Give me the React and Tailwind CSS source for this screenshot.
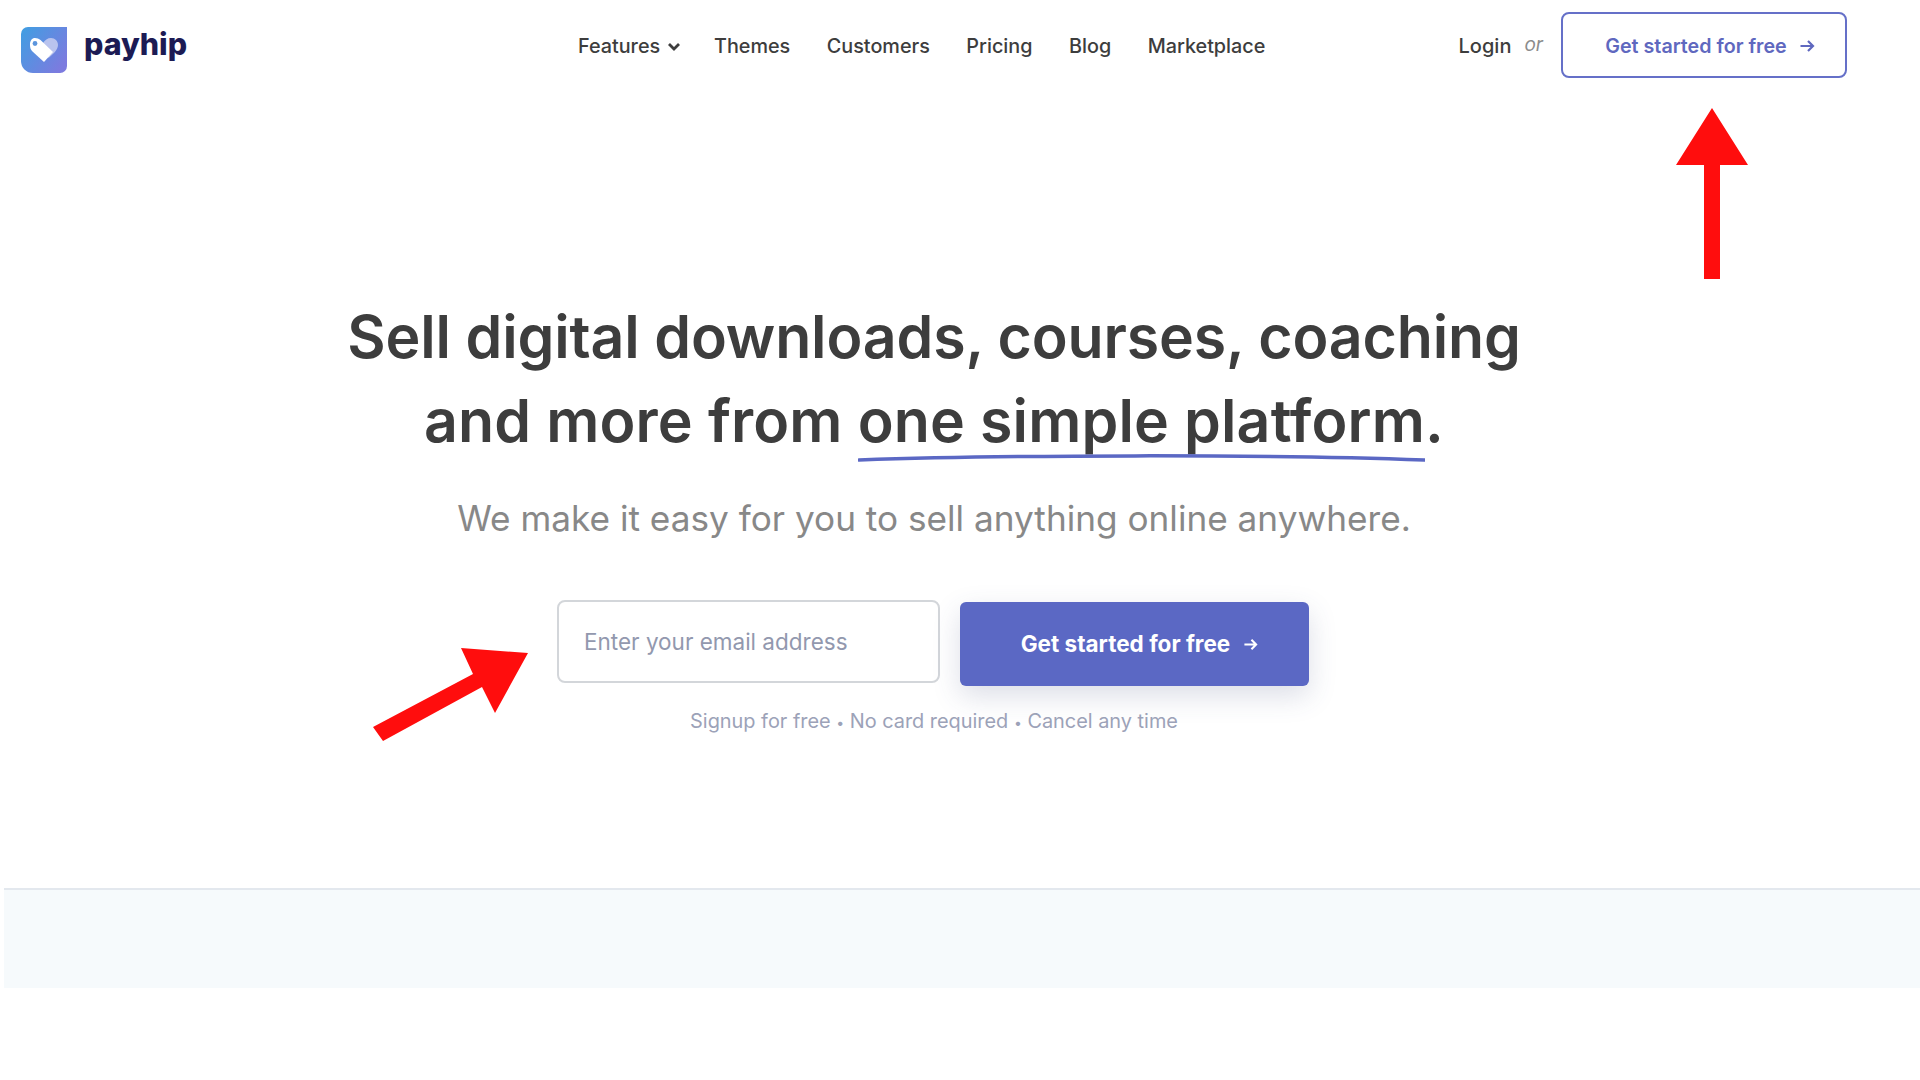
import React from 'react';

const navLinks = ['Themes', 'Customers', 'Pricing', 'Blog', 'Marketplace'];

const ArrowRight = ({ className }) => (
  <svg viewBox="0 0 16 16" className={className} fill="none" stroke="currentColor" strokeWidth="2.200">
    <path d="M1.500 8h12.500M9 3l5 5-5 5" />
  </svg>
);

const Logo = () => (
  <svg viewBox="0 0 46 46" className="w-[46px] h-[46px] mt-[10px]">
    <defs>
      <linearGradient id="logoFill" x1="0" y1="0" x2="1" y2="0.7">
        <stop offset="0" stopColor="#3f9fe2" />
        <stop offset="1" stopColor="#7c7bdf" />
      </linearGradient>
    </defs>
    <path d="M7 0H46V39a7 7 0 0 1-7 7H12A12 12 0 0 1 0 34V7A7 7 0 0 1 7 0Z" fill="url(#logoFill)" />
    <path d="M22 16c2-3 4.500-5 8-5 4 0 7 3 7 7 0 5-5 9-9.500 13Z" fill="#b9c3ee" />
    <path d="M14 11c2 0 4 .8 5.500 2L32 25 23 35 11.500 24.500C9.500 22.500 9 20.500 9 17.500c0-4 2-6.500 5-6.500Z" fill="#fff" />
    <circle cx="14" cy="16.500" r="2.400" fill="#5b95dd" />
  </svg>
);

const ArrowOverlays = () => (
  <>
    <svg viewBox="0 0 72 171" className="absolute left-[1676px] top-[108px] w-[72px] h-[171px]">
      <path d="M36 0L72 57H44V171H28V57H0Z" fill="#ff0d0d" />
    </svg>
    <svg viewBox="0 0 156 94" className="absolute left-[373px] top-[648px] w-[156px] h-[94px]">
      <path d="M155 5L88 0L100 26L0 79L10 93L109 39L122 65Z" fill="#ff0d0d" />
    </svg>
  </>
);

export default function App() {
  return (
    <div className="relative min-h-[1080px] bg-white overflow-hidden font-['Inter',sans-serif] text-[#3d3d3d]">
      <header className="flex items-center h-[66px] mt-[12px] pl-[21px]">
        <a className="flex items-center gap-[17px] w-[557px]">
          <Logo />
          <span className="text-[30.400px] font-extrabold leading-none text-[#1c1b54] mb-[2px]">payhip</span>
        </a>
        <nav className="flex items-center text-[19.800px] font-medium leading-[28px] mt-[1px]">
          <span className="flex items-center gap-[8px] w-[136px]">
            Features
            <svg viewBox="0 0 12 8" className="w-[12px] h-[8px] mt-[3px]" fill="none" stroke="currentColor" strokeWidth="2.800">
              <path d="M1 1l5 5 5-5" />
            </svg>
          </span>
          <div className="flex gap-[36.500px]">
            {navLinks.map((link) => (
              <a key={link}>{link}</a>
            ))}
          </div>
        </nav>
        <div className="flex items-center ml-auto mr-[73px]">
          <a className="text-[20px] font-medium mt-[1px]">Login</a>
          <span className="ml-[13px] mr-[18px] text-[19px] italic text-[#8c8c8c]">or</span>
          <a className="flex items-center justify-center gap-[12px] w-[286px] h-[66px] pl-[12px] border-2 border-[#6570c8] rounded-[8px] text-[19.700px] leading-[28px] font-semibold text-[#5f68bf]">
            <span className="mt-[1px]">Get started for free</span>
            <ArrowRight className="w-[16px] h-[16px] mt-[1px]" />
          </a>
        </div>
      </header>

      <main className="w-[1868px] pt-[217px] flex flex-col items-center text-center">
        <h1 className="text-[59px] tracking-[-0.150px] leading-[84px] font-semibold">
          Sell digital downloads, courses, coaching
          <br />
          <span className="tracking-[0.150px]">
            and more from{' '}
            <span className="relative inline-block">
              one simple platform
              <svg viewBox="0 0 568 8" preserveAspectRatio="none" className="absolute left-0 bottom-[1px] w-full h-[8px]">
                <path d="M1 6C150 1 400 0 567 6" fill="none" stroke="#5b68c4" strokeWidth="3.500" strokeLinecap="round" />
              </svg>
            </span>
            .
          </span>
        </h1>
        <p className="mt-[31px] text-[35.200px] leading-[48px] text-[#888888]">
          We make it easy for you to sell anything online anywhere.
        </p>
        <form className="mt-[58px] -ml-[2px] flex items-start gap-[20px]">
          <input
            placeholder="Enter your email address"
            className="w-[383px] h-[83px] px-[25px] bg-white border-2 border-[#d3d6da] rounded-[8px] text-[22.500px] outline-none placeholder:text-[#9298ae]"
          />
          <button type="button" className="flex items-center justify-center gap-[13px] w-[349px] h-[84px] mt-[2px] pl-[10px] rounded-[6px] bg-[#5b68c4] text-white text-[22.500px] font-bold shadow-[0_10px_28px_rgba(60,70,120,0.18)]">
            Get started for free
            <ArrowRight className="w-[15px] h-[15px] mt-[1px]" />
          </button>
        </form>
        <p className="mt-[21px] text-[19.900px] leading-[28px] text-[#9ca2b8]">
          Signup for free <span className="text-[14px]">•</span> No card required <span className="text-[14px]">•</span> Cancel any time
        </p>
      </main>

      <section className="ml-[4px] mt-[151px] h-[100px] bg-[#f6fafc] border-t-2 border-[#e3e8ee]" />

      <ArrowOverlays />
    </div>
  );
}
